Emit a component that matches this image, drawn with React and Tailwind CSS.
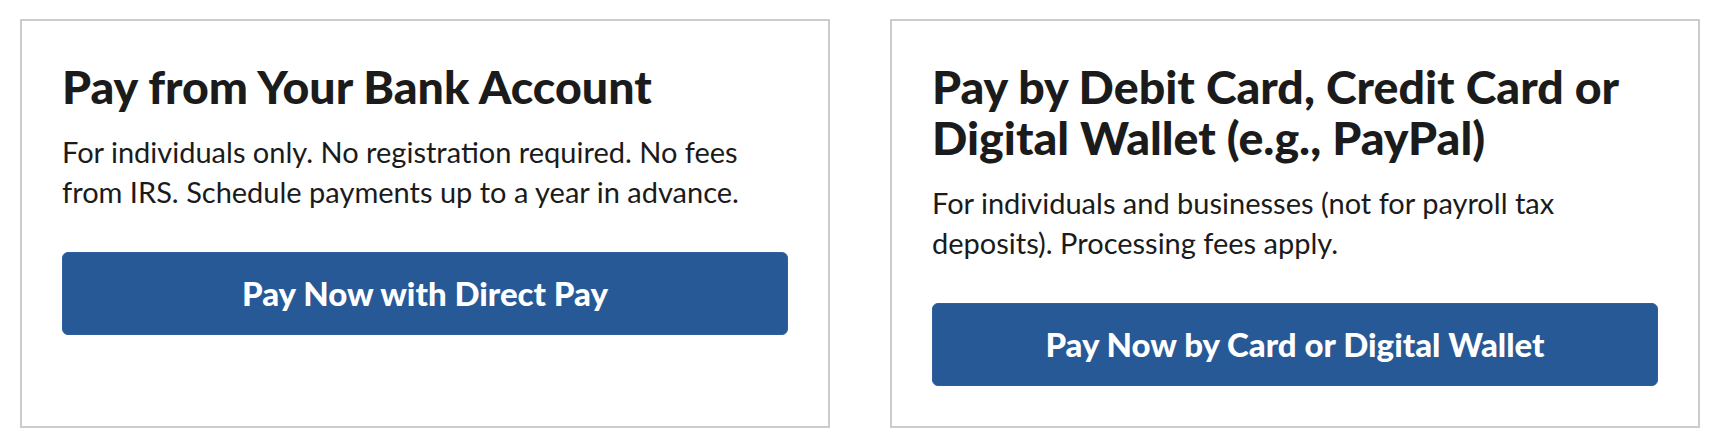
import React from 'react';

const options = [
  {
    title: 'Pay from Your Bank Account',
    text: 'For individuals only. No registration required. No fees from IRS. Schedule payments up to a year in advance.',
    button: 'Pay Now with Direct Pay',
  },
  {
    title: 'Pay by Debit Card, Credit Card or Digital Wallet (e.g., PayPal)',
    text: 'For individuals and businesses (not for payroll tax deposits). Processing fees apply.',
    button: 'Pay Now by Card or Digital Wallet',
  },
];

function PayCard({ title, text, button }) {
  return (
    <div className="w-[810px] border-2 border-[#cccccc] bg-white p-[40px]">
      <h2 className="text-[46.5px] leading-[51px] font-black text-[#1b1b1b]">{title}</h2>
      <p className="mt-[20px] text-[29px] leading-[40px] text-[#1b1b1b]">{text}</p>
      <a
        href="#"
        className="mt-[40px] flex h-[83px] w-full items-center justify-center rounded-[6px] border border-[#2f609d] bg-[#275997] text-[33px] font-black text-white"
      >
        {button}
      </a>
    </div>
  );
}

export default function App() {
  return (
    <div
      className="flex min-h-[444px] items-start bg-white pt-[19px] pl-[20px]"
      style={{ fontFamily: 'Lato, "Open Sans", sans-serif' }}
    >
      <div className="flex items-stretch gap-[60px]">
        {options.map((o) => (
          <PayCard key={o.button} {...o} />
        ))}
      </div>
    </div>
  );
}
